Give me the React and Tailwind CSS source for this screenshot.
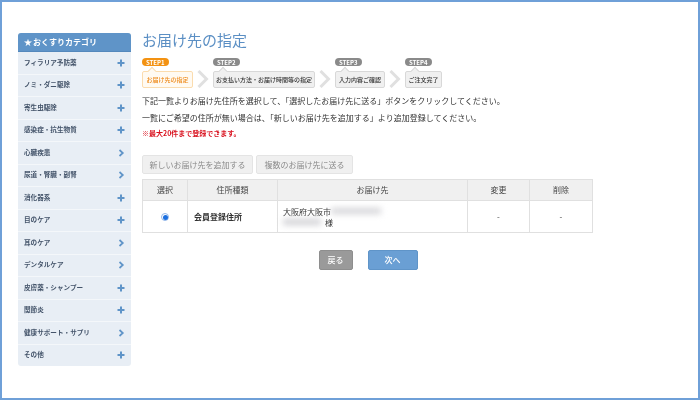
import React from "react";

const Plus = () => (
  <svg width="8" height="8" viewBox="0 0 8 8" className="shrink-0">
    <path d="M4 0.5V7.5M0.5 4H7.5" stroke="#5f94c8" strokeWidth="2" fill="none" />
  </svg>
);
const Chev = () => (
  <svg width="8" height="8" viewBox="0 0 8 8" className="shrink-0">
    <path d="M2.5 1L5.8 4L2.5 7" stroke="#5f94c8" strokeWidth="1.7" fill="none" />
  </svg>
);

const cats = [
  ["フィラリア予防薬", 1],
  ["ノミ・ダニ駆除", 1],
  ["寄生虫駆除", 1],
  ["感染症・抗生物質", 1],
  ["心臓疾患", 0],
  ["尿道・腎臓・副腎", 0],
  ["消化器系", 1],
  ["目のケア", 1],
  ["耳のケア", 0],
  ["デンタルケア", 0],
  ["皮膚薬・シャンプー", 1],
  ["関節炎", 1],
  ["健康サポート・サプリ", 0],
  ["その他", 1],
];

const steps = [
  ["STEP1", "お届け先の指定", true, "w-[51px]"],
  ["STEP2", "お支払い方法・お届け時間等の指定", false, "w-[102px]"],
  ["STEP3", "入力内容ご確認", false, "w-[50px]"],
  ["STEP4", "ご注文完了", false, "w-[37px]"],
];

function Step({ label, text, active, width }) {
  return (
    <div className="flex flex-col items-start">
      <div className={`h-[8px] px-[4px] rounded-full flex items-center text-[6px] font-bold text-white ${active ? "bg-[#f39212]" : "bg-[#8a8a8a]"}`}>
        {label}
      </div>
      <div className={`relative mt-[5px] h-[17px] ${width} flex items-center justify-center rounded-[2px] border text-[6px] font-medium whitespace-nowrap ${active ? "border-[#fbdcae] bg-[#fffaf2] text-[#ee8a1a]" : "border-[#d8d8d8] bg-[#f0f0f0] text-[#333]"}`}>
        <span className={`absolute left-[6px] top-[-4px] w-[6px] h-[6px] rotate-45 border-l border-t ${active ? "border-[#fbdcae] bg-[#fffaf2]" : "border-[#d8d8d8] bg-[#f0f0f0]"}`} />
        <span className="relative">{text}</span>
      </div>
    </div>
  );
}

const Sep = () => (
  <svg width="12" height="18" viewBox="0 0 12 18" className="mt-[12px] mx-[4px] shrink-0">
    <path d="M1.5 1L9.5 9L1.5 17" stroke="#e0e0e0" strokeWidth="3" fill="none" />
  </svg>
);

export default function App() {
  return (
    <div
      className="w-[700px] h-[400px] box-border border-2 border-[#6fa0d8] bg-white flex overflow-hidden pl-[16px] pt-[31px]"
      style={{ fontFamily: '"Noto Sans CJK JP", "Noto Sans", sans-serif' }}
    >
      <aside className="w-[113px] h-[333px] shrink-0 flex flex-col rounded-[3px] overflow-hidden bg-[#e8eef5] blur-[0.35px]">
        <div className="h-[19px] shrink-0 bg-[#5f94c8] border-b border-[#5488bc] flex items-center pl-[6px] text-[8px] font-bold text-white">
          <span className="text-[8px] mr-[1px]">★</span>おくすりカテゴリ
        </div>
        <div className="flex-1 flex flex-col">
          {cats.map(([t, p], i) => (
            <div key={t} className={`flex-1 flex items-center justify-between pl-[6px] pr-[6px] text-[6.6px] font-bold text-[#44546a] ${i ? "border-t border-[#f4f7fa]" : ""}`}>
              <span>{t}</span>
              {p ? <Plus /> : <Chev />}
            </div>
          ))}
        </div>
      </aside>

      <main className="ml-[11px] w-[450px] flex flex-col blur-[0.35px]">
        <h1 className="text-[15px] leading-[20px] text-[#5b8fc4] mt-[-3px]">お届け先の指定</h1>
        <div className="flex items-start mt-[8px]">
          {steps.map(([l, t, a, w], i) => (
            <React.Fragment key={l}>
              {i > 0 && <Sep />}
              <Step label={l} text={t} active={a} width={w} />
            </React.Fragment>
          ))}
        </div>
        <div className="mt-[4px] text-[8px] leading-[17px] text-[#333]">
          <p>下記一覧よりお届け先住所を選択して、「選択したお届け先に送る」ボタンをクリックしてください。</p>
          <p>一覧にご希望の住所が無い場合は、「新しいお届け先を追加する」より追加登録してください。</p>
          <p className="text-[7px] leading-[14px] font-bold text-[#d9121f]">※最大20件まで登録できます。</p>
        </div>
        <div className="flex gap-[3px] mt-[15px]">
          <div className="w-[111px] h-[19px] flex items-center justify-center bg-[#f0f0f0] border border-[#e4e4e4] rounded-[2px] text-[8px] text-[#8a8a8a]">新しいお届け先を追加する</div>
          <div className="w-[97px] h-[19px] flex items-center justify-center bg-[#f0f0f0] border border-[#e4e4e4] rounded-[2px] text-[8px] text-[#8a8a8a]">複数のお届け先に送る</div>
        </div>
        <table className="mt-[5px] w-[450px] table-fixed border-collapse text-[8px] text-[#444]">
          <colgroup>
            <col className="w-[45px]" />
            <col className="w-[90px]" />
            <col className="w-[190px]" />
            <col className="w-[62px]" />
            <col className="w-[63px]" />
          </colgroup>
          <thead>
            <tr className="h-[21px] bg-[#f0f0f0]">
              {["選択", "住所種類", "お届け先", "変更", "削除"].map((h) => (
                <th key={h} className="font-normal border border-[#e0e0e0] p-0">{h}</th>
              ))}
            </tr>
          </thead>
          <tbody>
            <tr className="h-[32px]">
              <td className="border border-[#e0e0e0] p-0 text-center">
                <span className="inline-flex w-[8px] h-[8px] rounded-full bg-white border border-[#8fb4e8] items-center justify-center align-middle">
                  <span className="w-[5px] h-[5px] rounded-full bg-[#1a6fe0]" />
                </span>
              </td>
              <td className="border border-[#e0e0e0] p-0 pl-[6px] font-bold text-[8px] text-[#333]">会員登録住所</td>
              <td className="border border-[#e0e0e0] p-0 pl-[5px] leading-[11px] text-[#333]">
                <div className="flex items-center">
                  大阪府大阪市
                  <span className="inline-block w-[50px] h-[6px] bg-[#d4d4d8] blur-[3px]" />
                </div>
                <div className="flex items-center">
                  <span className="inline-block w-[38px] h-[6px] bg-[#d0d0d4] blur-[3px] mr-[4px]" />様
                </div>
              </td>
              <td className="border border-[#e0e0e0] p-0 text-center">-</td>
              <td className="border border-[#e0e0e0] p-0 text-center">-</td>
            </tr>
          </tbody>
        </table>
        <div className="flex justify-center gap-[15px] mt-[17px] pl-[2px]">
          <div className="w-[34px] h-[20px] flex items-center justify-center rounded-[2px] bg-[#9a9a9a] border border-[#8e8e8e] text-[8px] font-medium text-white">戻る</div>
          <div className="w-[50px] h-[20px] flex items-center justify-center rounded-[2px] bg-[#6a9fd4] border border-[#5f94c8] text-[8px] font-medium text-white">次へ</div>
        </div>
      </main>
    </div>
  );
}
